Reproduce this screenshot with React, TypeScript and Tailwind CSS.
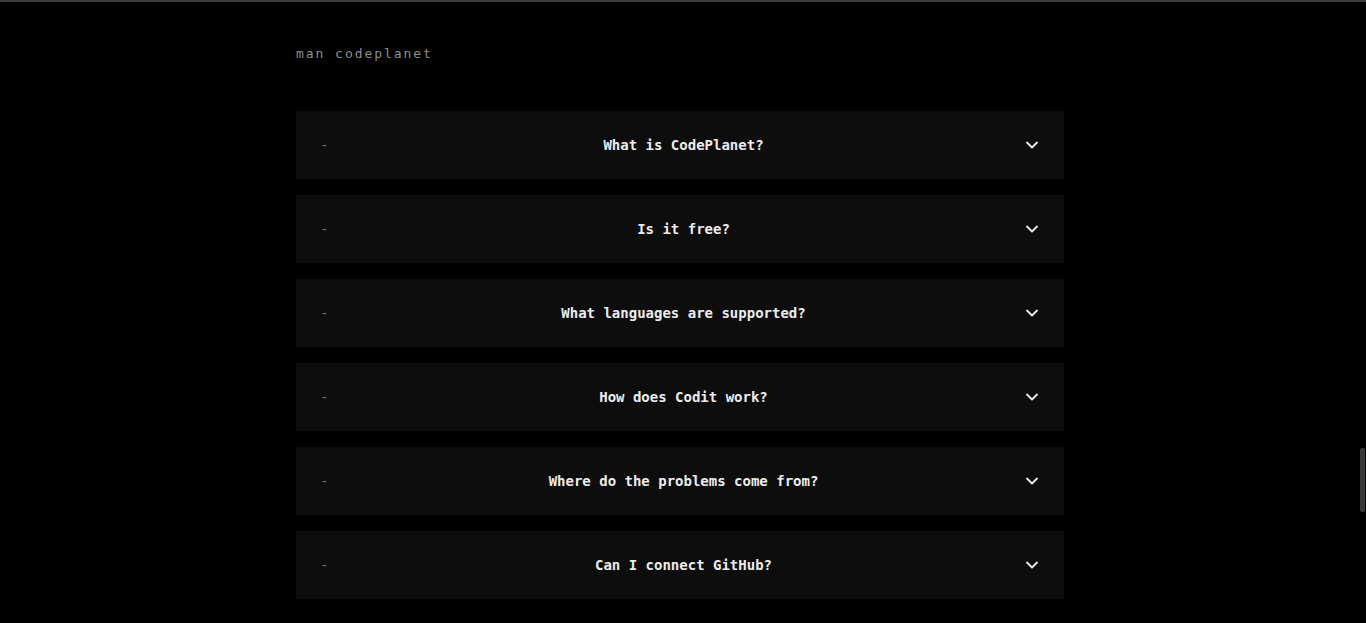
import { ChevronDown } from "lucide-react";

const questions = [
  "What is CodePlanet?",
  "Is it free?",
  "What languages are supported?",
  "How does Codit work?",
  "Where do the problems come from?",
  "Can I connect GitHub?",
];

const mono = { fontFamily: '"DejaVu Sans Mono", "Liberation Mono", monospace' };

export default function App() {
  return (
    <div className="h-[623px] overflow-hidden bg-black border-t-2 border-[#3c3c3c] flex" style={mono}>
      <main className="flex-1">
        <div className="mx-auto w-[768px] pt-[43px]">
          <h2 className="text-[13px] leading-[18px] tracking-[0.15em] text-[#8e8e8e] font-normal">
            man codeplanet
          </h2>
          <div className="mt-[48px] flex flex-col gap-4">
            {questions.map((q) => (
              <div
                key={q}
                className="h-[68px] bg-[#0d0d0d] flex items-center pl-[24px] pr-[22px]"
              >
                <span className="text-[14px] text-[#6a6a6a] w-[25px]">-</span>
                <span className="flex-1 text-center text-[14px] font-bold text-[#ececec]">
                  {q}
                </span>
                <ChevronDown size={20} strokeWidth={2.25} className="text-[#e8e8e8]" />
              </div>
            ))}
          </div>
        </div>
      </main>
      {/* scrollbar track */}
      <div className="w-[6px] pt-[446px]">
        <div className="w-[5px] h-[64px] rounded-full bg-[#3a3a3a]" />
      </div>
    </div>
  );
}
